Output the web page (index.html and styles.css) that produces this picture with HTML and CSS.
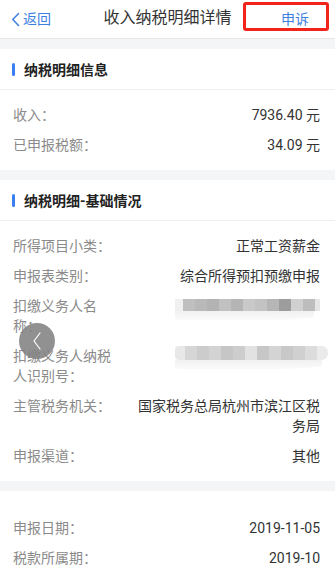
FILE: index.html
```html
<!DOCTYPE html>
<html lang="zh-CN">
<head>
<meta charset="utf-8">
<title>收入纳税明细详情</title>
<link rel="stylesheet" href="styles.css">
</head>
<body>
<div class="page">
  <header class="nav">
    <a class="nav-back">
      <svg class="chev" width="9" height="15" viewBox="0 0 9 15"><polyline points="7.5,1.5 1.8,7.5 7.5,13.5" fill="none" stroke="#3d7fe0" stroke-width="1.5" stroke-linecap="round" stroke-linejoin="round"/></svg>
      <span>返回</span>
    </a>
    <h1 class="nav-title">收入纳税明细详情</h1>
    <a class="nav-action">申诉</a>
    <span class="mark"></span>
  </header>

  <section class="card">
    <div class="card-head"><span class="bar"></span>纳税明细信息</div>
    <div class="card-body">
      <div class="row"><span class="label">收入：</span><span class="value">7936.40 元</span></div>
      <div class="row"><span class="label">已申报税额：</span><span class="value">34.09 元</span></div>
    </div>
  </section>

  <section class="card">
    <div class="card-head"><span class="bar"></span>纳税明细-基础情况</div>
    <div class="card-body">
      <div class="row"><span class="label">所得项目小类：</span><span class="value">正常工资薪金</span></div>
      <div class="row"><span class="label">申报表类别：</span><span class="value">综合所得预扣预缴申报</span></div>
      <div class="row"><span class="label">扣缴义务人名称：</span><span class="value"><span class="redact redact-a"></span></span></div>
      <div class="row"><span class="label">扣缴义务人纳税人识别号：</span><span class="value"><span class="redact redact-b"></span></span></div>
      <div class="row"><span class="label">主管税务机关：</span><span class="value">国家税务总局杭州市滨江区税务局</span></div>
      <div class="row"><span class="label">申报渠道：</span><span class="value">其他</span></div>
    </div>
  </section>

  <section class="card card-plain">
    <div class="card-body">
      <div class="row"><span class="label">申报日期：</span><span class="value">2019-11-05</span></div>
      <div class="row"><span class="label">税款所属期：</span><span class="value">2019-10</span></div>
    </div>
  </section>

  <button class="float-back" aria-label="返回">
    <svg width="12" height="20" viewBox="0 0 12 20"><polyline points="9,2 3,10 9,18" fill="none" stroke="#fff" stroke-width="1.2" stroke-linecap="round" stroke-linejoin="round"/></svg>
  </button>
</div>
</body>
</html>
```

FILE: styles.css
```css
* { box-sizing: border-box; margin: 0; padding: 0; }
html, body { background: #f4f5f7; }
body {
  font-family: Roboto, "Noto Sans CJK SC", sans-serif;
  color: #333;
  width: 335px;
  height: 581px;
  overflow: hidden;
}
.page { position: relative; }

.nav {
  position: relative;
  height: 39px;
  background: #fff;
  border-bottom: 1px solid #e6e6e6;
  display: grid;
  grid-template-columns: 1fr auto 1fr;
  align-items: center;
  margin-bottom: 10px;
}
.nav-back {
  display: flex;
  align-items: center;
  gap: 3px;
  padding-left: 11px;
  color: #3d7fe0;
  font-size: 14px;
  line-height: 20px;
}
.nav-title {
  font-size: 16px;
  font-weight: normal;
  color: #333;
  line-height: 22px;
  padding-bottom: 2px;
}
.nav-action {
  justify-self: end;
  padding-right: 26px;
  color: #3d7fe0;
  font-size: 14px;
  line-height: 20px;
}
.mark {
  position: absolute;
  left: 243px;
  top: 2px;
  width: 86px;
  height: 29px;
  border: 3px solid #f2231a;
  border-radius: 3px;
}

.card {
  background: #fff;
  margin-bottom: 10px;
}
.card-head {
  height: 41px;
  border-bottom: 1px solid #efefef;
  display: flex;
  align-items: center;
  gap: 9px;
  padding-left: 12px;
  font-size: 14px;
  font-weight: bold;
  color: #222;
}
.bar {
  width: 3px;
  height: 13px;
  border-radius: 2px;
  background: #3a7ff2;
}
.card-body {
  padding: 10px 15px 10px 13px;
}
.card-plain .card-body { padding-top: 22px; padding-bottom: 9px; }

.row {
  display: flex;
  align-items: flex-start;
  padding: 5px 0;
  font-size: 14px;
  line-height: 20px;
}
.label {
  width: 100px;
  flex-shrink: 0;
  color: #8a8a8a;
}
.value {
  flex: 1;
  margin-left: 15px;
  text-align: right;
  color: #333;
  display: flex;
  justify-content: flex-end;
  flex-wrap: wrap;
}

.redact {
  display: block;
  position: relative;
}
.redact::after {
  content: "";
  position: absolute;
  left: 0;
  right: 6px;
  top: 100%;
  height: 9px;
  background: linear-gradient(180deg, #f1f1f1, #fafafa);
  border-radius: 0 0 40% 10%;
}
.redact-a {
  width: 145px;
  height: 12px;
  margin-top: 3px;
  background: linear-gradient(90deg,
    #f0f0f0 0 8px, #bfbfbf 8px 20px, #b9b9b9 20px 32px, #b3b3b3 32px 44px,
    #c1c1c1 44px 56px, #b5b5b5 56px 68px, #c9c9c9 68px 80px, #c3c3c3 80px 92px,
    #b6b6b6 92px 104px, #9d9d9d 104px 116px, #d0d0d0 116px 128px, #bdbdbd 128px 140px, #e5e5e5 140px);
}
.redact-b {
  width: 153px;
  height: 14px;
  margin-right: -8px;
  margin-top: 0;
  border-radius: 4px 6px 6px 4px;
  background: linear-gradient(90deg,
    #e8e8e8 0 10px, #d6d6d6 10px 22px, #cccccc 22px 34px, #d3d3d3 34px 46px,
    #c6c6c6 46px 58px, #cdcdcd 58px 70px, #e2e2e2 70px 82px, #c7c7c7 82px 94px,
    #d4d4d4 94px 106px, #c8c8c8 106px 118px, #d0d0d0 118px 130px, #dcdcdc 130px 142px, #ebebeb 142px);
}

.float-back {
  position: absolute;
  left: 19px;
  top: 323px;
  width: 36px;
  height: 36px;
  border: none;
  border-radius: 50%;
  background: rgba(130, 130, 130, 0.88);
  display: flex;
  align-items: center;
  justify-content: center;
}
```
